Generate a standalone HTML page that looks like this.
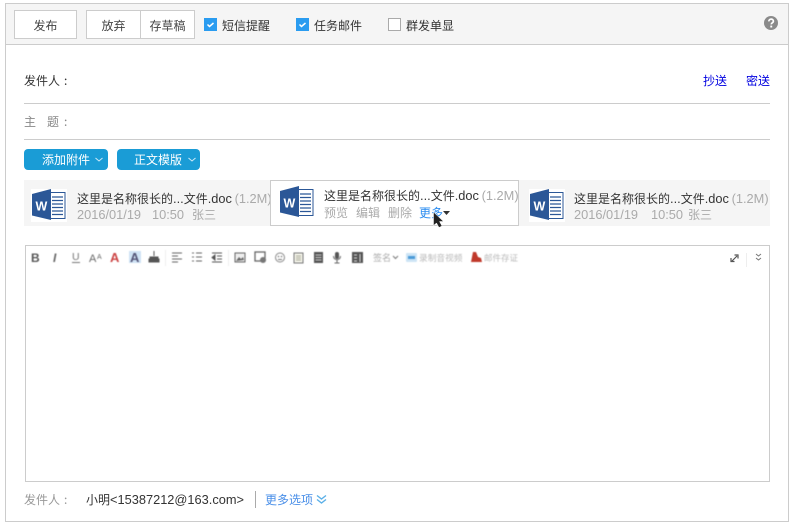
<!DOCTYPE html>
<html><head><meta charset="utf-8">
<style>
html,body{margin:0;padding:0;background:#fff}
body{width:798px;height:528px;position:relative;overflow:hidden;font:12px "Noto Sans CJK SC","Liberation Sans",sans-serif;color:#333}
div,span,svg{position:absolute;box-sizing:border-box;white-space:nowrap}
.t{line-height:16px;height:16px}
.btn{background:#fff;border:1px solid #ccc;text-align:center;line-height:29px;height:29px;color:#444}
.blue{background:#1a9cd6;color:#fff;border-radius:4px;height:21px;line-height:21px;font-size:12px}
.cb{width:13px;height:13px;background:#2a9cf0;top:18px}
.g{color:#aaa}
.s{position:static}
.l{position:static;font:12.8px/16px "Liberation Sans",sans-serif}
</style></head><body>
<div style="left:5px;top:3px;width:784px;height:519px;border:1px solid #ccc"></div>
<div style="left:6px;top:4px;width:782px;height:41px;background:#f5f5f5;border-bottom:1px solid #ccc"></div>

<div class="btn" style="left:14px;top:10px;width:63px">发布</div>
<div class="btn" style="left:86px;top:10px;width:55px">放弃</div>
<div class="btn" style="left:140px;top:10px;width:55px">存草稿</div>

<div class="cb" style="left:204px"></div>
<svg style="left:204px;top:18px" width="13" height="13"><path d="M3.500 6.500l2 2 4-3.500" stroke="#fff" stroke-width="1.500" fill="none"/></svg>
<div class="t" style="left:222px;top:18px">短信提醒</div>
<div class="cb" style="left:296px"></div>
<svg style="left:296px;top:18px" width="13" height="13"><path d="M3.500 6.500l2 2 4-3.500" stroke="#fff" stroke-width="1.500" fill="none"/></svg>
<div class="t" style="left:314px;top:18px">任务邮件</div>
<div class="cb" style="left:388px;background:#fff;border:1px solid #aaa"></div>
<div class="t" style="left:406px;top:18px">群发单显</div>

<svg style="left:764px;top:16px" width="14" height="14"><circle cx="7" cy="7" r="7" fill="#8a8a8a"/><path d="M4.800 5.400c0-3 4.600-3 4.600-.2 0 1.600-2.200 1.600-2.200 3.200" stroke="#fff" stroke-width="1.700" fill="none"/><rect x="6.300" y="9.600" width="1.900" height="1.900" fill="#fff"/></svg>

<div class="t" style="left:24px;top:73px">发件人</div><div class="t" style="left:64px;top:73px">:</div>
<div class="t" style="left:703px;top:73px;color:#0000e0">抄送</div>
<div class="t" style="left:746px;top:73px;color:#0000e0">密送</div>
<div style="left:24px;top:103px;width:746px;height:1px;background:#ccc"></div>
<div class="t" style="left:24px;top:114px;color:#888">主</div><div class="t" style="left:47px;top:114px;color:#888">题</div><div class="t" style="left:64px;top:114px;color:#888">:</div>
<div style="left:24px;top:139px;width:746px;height:1px;background:#ccc"></div>

<div class="blue" style="left:24px;top:149px;width:84px;padding-left:18px">添加附件</div>
<svg style="left:94px;top:157px" width="10" height="6"><path d="M1.500 1l3.500 3 3.500-3" stroke="#cfeaf7" fill="none"/></svg>
<div class="blue" style="left:117px;top:149px;width:83px;padding-left:17px">正文模版</div>
<svg style="left:187px;top:157px" width="10" height="6"><path d="M1.500 1l3.500 3 3.500-3" stroke="#cfeaf7" fill="none"/></svg>

<div style="left:24px;top:180px;width:746px;height:46px;background:#f5f5f5"></div>

<svg style="left:31px;top:189px" width="36" height="33" viewBox="0 0 36 33"><rect width="36" height="33" fill="#fff"/><rect x="19" y="3.500" width="15" height="26" fill="#fff" stroke="#2b5797"/><path d="M21 8h11M21 11.500h11M21 15h11M21 18.500h11M21 22h11M21 25.500h11" stroke="#2b5797" stroke-width="1.300"/><path d="M1 5L20 0v31L1 26.500z" fill="#2b5797"/><text x="4.500" y="21.500" font-family="Liberation Sans" font-size="12.500" font-weight="bold" fill="#fff">W</text></svg>
<div class="t" style="left:77px;top:191px">这里是名称很长的<span class="l">...</span>文件<span class="l">.doc</span> <span class="l g">(1.2M)</span></div>
<div class="t g" style="left:77px;top:207px;font:12.8px/16px 'Liberation Sans',sans-serif">2016/01/19</div><div class="t g" style="left:152px;top:207px;font:12.8px/16px 'Liberation Sans',sans-serif">10:50</div><div class="t g" style="left:192px;top:207px">张三</div>

<div style="left:270px;top:180px;width:249px;height:46px;background:#fff;border:1px solid #ccc"></div>
<svg style="left:279px;top:186px" width="36" height="33" viewBox="0 0 36 33"><rect x="19" y="3.500" width="15" height="26" fill="#fff" stroke="#2b5797"/><path d="M21 8h11M21 11.500h11M21 15h11M21 18.500h11M21 22h11M21 25.500h11" stroke="#2b5797" stroke-width="1.300"/><path d="M1 5L20 0v31L1 26.500z" fill="#2b5797"/><text x="4.500" y="21.500" font-family="Liberation Sans" font-size="12.500" font-weight="bold" fill="#fff">W</text></svg>
<div class="t" style="left:324px;top:188px">这里是名称很长的<span class="l">...</span>文件<span class="l">.doc</span> <span class="l g">(1.2M)</span></div>
<div class="t g" style="left:324px;top:205px">预览</div>
<div class="t g" style="left:356px;top:205px">编辑</div>
<div class="t g" style="left:388px;top:205px">删除</div>
<div class="t" style="left:419px;top:205px;color:#2a8cf0">更多</div>
<svg style="left:443px;top:211px" width="8" height="5"><path d="M0 0h7L3.500 4z" fill="#333"/></svg>
<svg style="left:432px;top:211px" width="14" height="18"><path d="M1.500 1v13.500l3-2.500 2.500 4.500 3-1.500-2.500-4.500h4z" fill="#222" stroke="#fff" stroke-width=".5"/></svg>

<svg style="left:529px;top:189px" width="36" height="33" viewBox="0 0 36 33"><rect width="36" height="33" fill="#fff"/><rect x="19" y="3.500" width="15" height="26" fill="#fff" stroke="#2b5797"/><path d="M21 8h11M21 11.500h11M21 15h11M21 18.500h11M21 22h11M21 25.500h11" stroke="#2b5797" stroke-width="1.300"/><path d="M1 5L20 0v31L1 26.500z" fill="#2b5797"/><text x="4.500" y="21.500" font-family="Liberation Sans" font-size="12.500" font-weight="bold" fill="#fff">W</text></svg>
<div class="t" style="left:574px;top:191px">这里是名称很长的<span class="l">...</span>文件<span class="l">.doc</span> <span class="l g">(1.2M)</span></div>
<div class="t g" style="left:574px;top:207px;font:12.8px/16px 'Liberation Sans',sans-serif">2016/01/19</div><div class="t g" style="left:651px;top:207px;font:12.8px/16px 'Liberation Sans',sans-serif">10:50</div><div class="t g" style="left:688px;top:207px">张三</div>

<div style="left:25px;top:245px;width:745px;height:237px;border:1px solid #ccc"></div>

<svg style="left:26px;top:246px;filter:blur(.4px)" width="500" height="24" viewBox="0 0 500 24">
<text x="5" y="16" font-family="Liberation Sans" font-size="12" font-weight="bold" fill="#555">B</text>
<text x="27" y="16" font-family="Liberation Sans" font-size="12" font-style="italic" font-weight="bold" fill="#666">I</text>
<text x="46" y="14" font-family="Liberation Sans" font-size="10.500" fill="#777">U</text><path d="M46 16.500h8" stroke="#777"/>
<text x="63" y="16" font-family="Liberation Sans" font-size="11" fill="#666">A</text><text x="71" y="13" font-family="Liberation Sans" font-size="7" fill="#666">A</text>
<text x="84" y="16" font-family="Liberation Sans" font-size="13" font-weight="bold" fill="#c44">A</text>
<rect x="103" y="5" width="12" height="12" fill="#cfe3f5"/><text x="104" y="16" font-family="Liberation Sans" font-size="13" font-weight="bold" fill="#557">A</text>
<path d="M128 5v5M124 11h8v2h-8zM123 13h10v3h-10z" stroke="#555" fill="#555"/>
<path d="M139.500 4v16" stroke="#eee"/>
<path d="M146 7h10M146 10h6M146 13h10M146 16h6" stroke="#666"/>
<path d="M166 7h2M170 7h6M166 11h2M170 11h6M166 15h2M170 15h6" stroke="#666"/>
<path d="M186 7h10M191 10h5M191 13h5M186 16h10M189 9l-3 2.500 3 2.500z" stroke="#555" fill="#555"/>
<path d="M202.500 4v16" stroke="#eee"/>
<rect x="209" y="7" width="10" height="9" fill="#eee" stroke="#666"/><path d="M210 15l3-4 2 2 2-2 1 3z" fill="#666"/>
<rect x="229" y="6" width="10" height="9" fill="none" stroke="#666" stroke-width="1.300"/><circle cx="237" cy="14" r="3" fill="#777"/>
<circle cx="254" cy="11.500" r="4.500" fill="none" stroke="#888"/><circle cx="252.500" cy="10.500" r=".8" fill="#777"/><circle cx="255.500" cy="10.500" r=".8" fill="#777"/><path d="M252 13.500h4" stroke="#777"/>
<rect x="268" y="7" width="9" height="10" fill="#f4f4ea" stroke="#777"/><path d="M270 10h5M270 12h5M270 14h5" stroke="#aa9"/>
<rect x="288" y="6" width="9" height="11" fill="#555"/><path d="M289.500 9h6M289.500 11.500h6M289.500 14h6" stroke="#ccc"/>
<rect x="309" y="6" width="4" height="7" rx="2" fill="#555"/><path d="M307.500 10c0 5 7 5 7 0M311 14v3M308.500 17h5" stroke="#666" fill="none"/>
<rect x="326" y="6" width="11" height="11" fill="#555"/><path d="M328 9h3M328 12h3M328 15h3M334 8v8" stroke="#ddd"/>
<text x="347" y="15" font-size="9" fill="#aaa" font-family="Noto Sans CJK SC,sans-serif">签名</text>
<path d="M367 10l2.500 2.500 2.500-2.500" stroke="#777" fill="none"/>
<rect x="380" y="7" width="11" height="9" rx="1" fill="#cde4f5"/><rect x="382" y="10" width="7" height="3" fill="#4a9bd8"/>
<text x="393" y="15" font-size="8.700" fill="#bbb" font-family="Noto Sans CJK SC,sans-serif">录制音视频</text>
<path d="M447 6l3 0 2 5 3 1 1 4h-11z" fill="#c0392b"/>
<text x="458" y="15" font-size="8.500" fill="#bbb" font-family="Noto Sans CJK SC,sans-serif">邮件存证</text>
</svg>

<svg style="left:730px;top:253px;filter:blur(.3px)" width="34" height="14"><path d="M2 8l5-5M4.500 2h3.500v3.500M1 5v3.500h3.500" stroke="#555" fill="none" stroke-width="1.200"/><path d="M16.500 0v14" stroke="#eee"/><path d="M26 1l2.500 2 2.500-2M26 5l2.500 2 2.500-2" stroke="#777" fill="none"/></svg>

<div class="t" style="left:24px;top:492px;color:#999">发件人</div><div class="t" style="left:64px;top:492px;color:#999">:</div>
<div class="t" style="left:86px;top:492px">小明<span class="l">&lt;15387212@163.com&gt;</span></div>
<div style="left:255px;top:491px;width:1px;height:17px;background:#aaa"></div>
<div class="t" style="left:265px;top:492px;color:#4a8fe8">更多选项</div>
<svg style="left:316px;top:494px" width="11" height="11"><path d="M1 1.500l4.500 3.500 4.500-3.500M1 5.500l4.500 3.500 4.500-3.500" stroke="#5bb0e8" stroke-width="1.400" fill="none"/></svg>
</body></html>
